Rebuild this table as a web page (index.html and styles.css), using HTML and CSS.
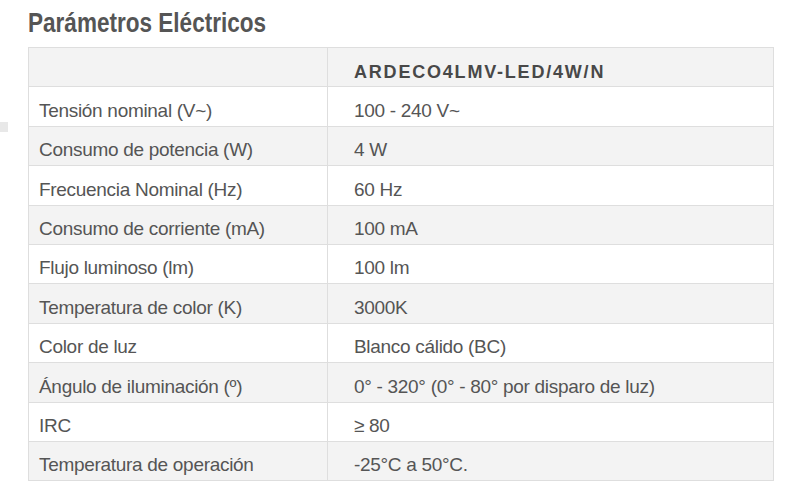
FILE: index.html
```html
<!DOCTYPE html>
<html lang="es">
<head>
<meta charset="utf-8">
<link rel="stylesheet" href="styles.css">
</head>
<body>
<div class="page">
  <span class="edge-mark"></span>
  <h1 class="title"><span>Parámetros Eléctricos</span></h1>
  <table class="spec">
    <colgroup><col class="c1"><col class="c2"></colgroup>
    <tr class="head"><td></td><td>ARDECO4LMV-LED/4W/N</td></tr>
    <tr><td>Tensión nominal (V~)</td><td>100 - 240 V~</td></tr>
    <tr><td>Consumo de potencia (W)</td><td>4 W</td></tr>
    <tr><td>Frecuencia Nominal (Hz)</td><td>60 Hz</td></tr>
    <tr><td>Consumo de corriente (mA)</td><td>100 mA</td></tr>
    <tr><td>Flujo luminoso (lm)</td><td>100 lm</td></tr>
    <tr><td>Temperatura de color (K)</td><td>3000K</td></tr>
    <tr><td>Color de luz</td><td>Blanco cálido (BC)</td></tr>
    <tr><td>Ángulo de iluminación (º)</td><td>0° - 320° (0° - 80° por disparo de luz)</td></tr>
    <tr><td>IRC</td><td>≥ 80</td></tr>
    <tr><td>Temperatura de operación</td><td>-25°C a 50°C.</td></tr>
  </table>
</div>
</body>
</html>
```
FILE: styles.css
```css
html, body {
  margin: 0;
  padding: 0;
  background: #fff;
}
.page {
  position: relative;
  width: 800px;
  height: 503px;
  padding: 8px 0 0 28px;
  box-sizing: border-box;
  font-family: "Liberation Sans", Arial, sans-serif;
  color: #555;
}
.edge-mark {
  position: absolute;
  left: 0;
  top: 122px;
  width: 8px;
  height: 10px;
  background: #e8e8e8;
}
.title {
  margin: 0;
  height: 39px;
  font-size: 28px;
  font-weight: bold;
  line-height: 30px;
  color: #555;
  white-space: nowrap;
}
.title span {
  display: inline-block;
  transform: scaleX(0.805);
  transform-origin: left center;
}
.spec {
  width: 746px;
  border-collapse: collapse;
  table-layout: fixed;
  font-size: 19px;
  letter-spacing: -0.3px;
}
.c1 { width: 299px; }
.spec tr {
  height: 39.4px;
}
.spec td {
  border: 1px solid #dedede;
  padding: 12.5px 0 0 10px;
  line-height: 22px;
  vertical-align: top;
  white-space: nowrap;
}
.spec td + td {
  padding-left: 26px;
}
.spec tr:nth-child(odd) {
  background: #f3f3f3;
}
.spec tr.head td {
  font-size: 18px;
  font-weight: bold;
  color: #484848;
  letter-spacing: 1.8px;
}
```
